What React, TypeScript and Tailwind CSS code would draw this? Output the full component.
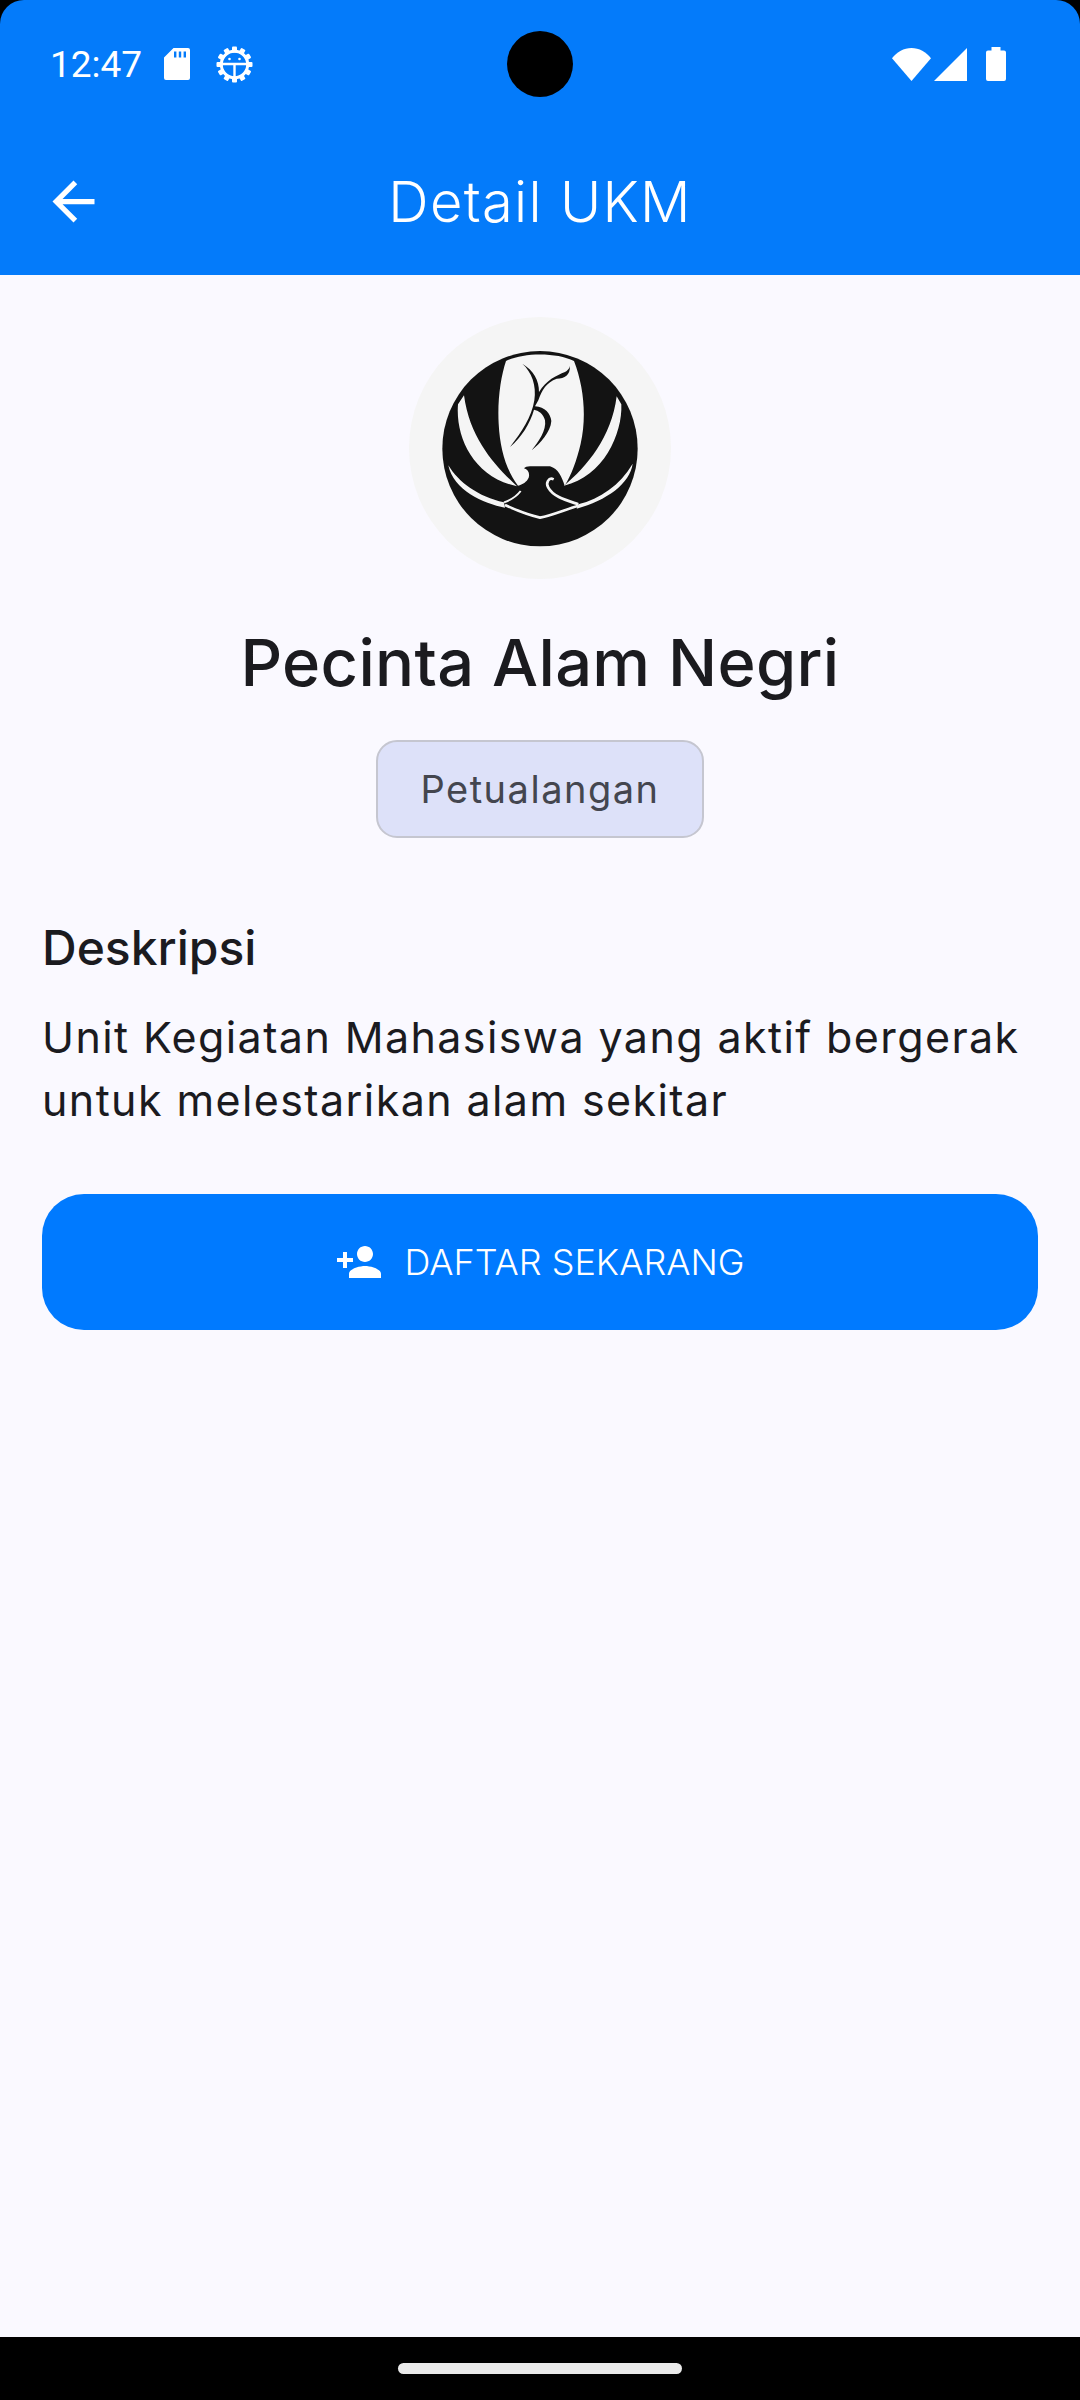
const sans = "font-['Inter','Noto_Sans',sans-serif]";

function SdIcon() {
  return (
    <svg width="26" height="32" viewBox="0 0 26 32" className="shrink-0 fill-white">
      <path
        fillRule="evenodd"
        d="M9.5 0H24a2 2 0 0 1 2 2v28a2 2 0 0 1-2 2H2a2 2 0 0 1-2-2V9.5L9.5 0zM10 3.5v6h2.4v-6H10zm4.8 0v6h2.4v-6h-2.4zm4.8 0v6H22v-6h-2.400z"
      />
    </svg>
  );
}

// debug gear: toothed ring with a small bug face inside
function GearIcon() {
  const teeth = Array.from({ length: 12 }, (_, i) => i * 30);
  return (
    <svg width="37" height="37" viewBox="0 0 37 37" className="shrink-0">
      {teeth.map((a) => (
        <rect key={a} x="16" y="0.5" width="5" height="6" rx="1" fill="white" transform={`rotate(${a} 18.5 18.5)`} />
      ))}
      <circle cx="18.5" cy="18.5" r="13.200" fill="none" stroke="white" strokeWidth="3" />
      <path d="M5.500 18h26M18.500 18v14" stroke="white" strokeWidth="2.400" fill="none" />
      <circle cx="13.500" cy="13" r="1.300" fill="white" />
      <circle cx="23.500" cy="13" r="1.300" fill="white" />
    </svg>
  );
}

function WifiIcon() {
  return (
    <svg width="39" height="33" viewBox="0 0 39 33" className="shrink-0 fill-white">
      <path d="M19.500 33 0 10.200C5 3.800 11.800 0 19.500 0S34 3.800 39 10.200L19.500 33z" />
    </svg>
  );
}

function SignalIcon() {
  return (
    <svg width="33" height="33" viewBox="0 0 33 33" className="shrink-0 fill-white">
      <path d="M33 0v33H0L33 0z" />
    </svg>
  );
}

function BatteryIcon() {
  return (
    <svg width="20" height="34" viewBox="0 0 20 34" className="shrink-0 fill-white">
      <path d="M5.500 0h9v3.500H18a2 2 0 0 1 2 2V32a2 2 0 0 1-2 2H2a2 2 0 0 1-2-2V5.500a2 2 0 0 1 2-2h3.500V0z" />
    </svg>
  );
}

function UkmLogo() {
  return (
    <svg viewBox="57 50 786 786" className="h-[262px] w-[262px] shrink-0 rounded-full bg-[#f5f5f5]">
      <circle cx="450" cy="445" r="293" fill="#131313" />
      {/* centre petal */}
      <path
        d="M348 182C400 156 500 156 552 182 582 260 590 350 572 430 560 480 545 522 524 556 515 530 505 505 480 498L420 498C412 498 405 500 402 504 415 508 420 520 416 532 410 545 398 552 384 556 350 510 330 450 326 370 322 300 332 230 348 182z"
        fill="#f5f5f5"
      />
      {/* inner wings */}
      <path d="M222 285 204 312C196 410 250 530 381 558 320 500 240 420 222 285z" fill="#f5f5f5" />
      <path d="M680 288 694 312C698 400 640 530 522 556 590 500 665 410 680 288z" fill="#f5f5f5" />
      {/* lower swoosh */}
      <path d="M175 495C205 545 265 590 342 606L345 622C280 610 190 570 175 495z" fill="#f5f5f5" />
      <path d="M728 490C690 555 630 595 565 612L560 625C650 600 720 550 728 490z" fill="#f5f5f5" />
      <path d="M345 614C380 630 420 645 450 652 485 645 520 630 565 616" fill="none" stroke="#f5f5f5" strokeWidth="8" />
      {/* neck lines */}
      <path d="M392 572C378 590 360 600 342 606" fill="none" stroke="#f5f5f5" strokeWidth="6" />
      <path d="M491 537C476 530 466 548 475 562 490 590 530 600 565 612" fill="none" stroke="#f5f5f5" strokeWidth="8" />
      {/* bird */}
      <path
        d="M397 190C430 210 448 240 447 275 468 240 500 225 525 215 532 212 538 205 540 197 540 225 525 235 500 235 470 245 455 270 445 300L435 318C465 320 482 340 484 362 482 395 450 430 425 450 445 425 470 390 465 360 460 340 445 330 432 328 420 370 395 410 360 440 395 395 425 350 433 300 440 255 425 215 397 190z"
        fill="#131313"
      />
    </svg>
  );
}

export default function App() {
  return (
    <div className={`flex h-[2400px] w-[1080px] flex-col overflow-hidden bg-black ${sans}`}>
      <header className="relative h-[275px] shrink-0 rounded-t-[24px] bg-[#047bfa] text-white">
        <div className="flex h-[128px] items-center pl-[50px] pr-[74px]">
          <span className="font-['Roboto',sans-serif] text-[37px] leading-none">12:47</span>
          <div className="ml-[22px] flex items-center gap-[26px]">
            <SdIcon />
            <GearIcon />
          </div>
          <div className="ml-auto flex items-center">
            <WifiIcon />
            <div className="ml-[3px]">
              <SignalIcon />
            </div>
            <div className="ml-[19px]">
              <BatteryIcon />
            </div>
          </div>
        </div>
        {/* camera cutout */}
        <div className="absolute left-[507px] top-[31px] h-[66px] w-[66px] rounded-full bg-black" />
        <div className="relative flex h-[147px] items-center justify-center">
          <svg viewBox="0 0 24 24" className="absolute left-[42px] top-[42px] h-[63px] w-[63px] fill-white">
            <path d="M20 11H7.830l5.590-5.590L12 4l-8 8 8 8 1.410-1.410L7.830 13H20v-2z" />
          </svg>
          <h1 className="text-[56px] font-light leading-none tracking-[1.300px]">Detail UKM</h1>
        </div>
      </header>

      <main className="flex flex-1 flex-col items-center bg-[#faf9ff] px-[42px] pt-[42px]">
        <UkmLogo />
        <h2 className="mt-[46px] text-[65px] font-medium leading-[76px] tracking-[0.300px] text-[#1b1b1f]">
          Pecinta Alam Negri
        </h2>
        <div className="mt-[39px] flex h-[98px] w-[328px] shrink-0 items-center justify-center rounded-[21px] border-[2px] border-[#c5c6d0] bg-[#dde1f9] text-[38px] tracking-[1.500px] text-[#44464f]">
          Petualangan
        </div>
        <section className="mt-[80px] w-full text-[#1b1b1f]">
          <h3 className="text-[48px] font-medium leading-[60px]">Deskripsi</h3>
          <p className="mt-[28px] text-[43px] leading-[63px] tracking-[1.400px]">
            Unit Kegiatan Mahasiswa yang aktif bergerak untuk melestarikan alam sekitar
          </p>
        </section>
        <button className="mt-[62px] flex h-[136px] w-full shrink-0 items-center justify-center rounded-[42px] bg-[#007aff] text-white">
          <svg viewBox="0 0 24 24" className="h-[48px] w-[48px] fill-white">
            <path d="M15 12c2.210 0 4-1.790 4-4s-1.790-4-4-4-4 1.790-4 4 1.790 4 4 4zm-9-2V7H4v3H1v2h3v3h2v-3h3v-2H6zm9 4c-2.670 0-8 1.340-8 4v2h16v-2c0-2.660-5.330-4-8-4z" />
          </svg>
          <span className="ml-[21px] text-[36px] font-light leading-none">DAFTAR SEKARANG</span>
        </button>
      </main>

      <footer className="flex h-[63px] shrink-0 items-center justify-center bg-black">
        <div className="h-[11px] w-[284px] rounded-full bg-[#eaeaea]" />
      </footer>
    </div>
  );
}
